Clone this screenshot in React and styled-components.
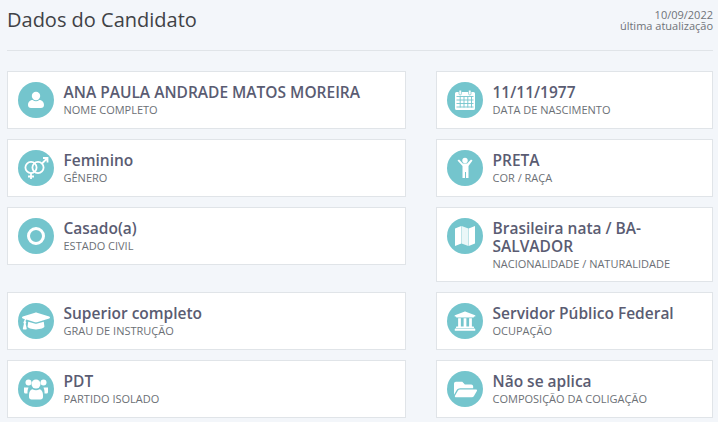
import styled, { createGlobalStyle } from "styled-components";
import { FaGraduationCap, FaUniversity, FaFolderOpen } from "react-icons/fa";

const GlobalStyle = createGlobalStyle`
    body {
        margin: 0;
        background: #f3f6fa;
        font-family: "Open Sans", "Liberation Sans", sans-serif;
    }
`;

const Page = styled.div`
    padding: 0 5px 0 7px;
    height: 422px;
    overflow: hidden;
    box-sizing: border-box;
`;
const Header = styled.div`
    display: flex;
    justify-content: space-between;
    height: 50px;
    border-bottom: 1px solid #e0e4e8;
    margin-bottom: 20px;
`;
const Title = styled.h1`
    margin: 0;
    padding-top: 6px;
    font-size: 20px;
    line-height: 27px;
    font-weight: 400;
    color: #3f4246;
`;
const Updated = styled.div`
    padding-top: 9px;
    font-size: 11px;
    line-height: 11px;
    text-align: right;
    color: #6f7378;
`;
const Grid = styled.div`
    display: grid;
    grid-template-columns: 399px 277px;
    column-gap: 30px;
    row-gap: 10px;
    align-items: start;
`;
const Card = styled.div`
    display: flex;
    align-items: flex-start;
    gap: 9.5px;
    box-sizing: border-box;
    min-height: 58px;
    padding: 10px;
    background: #fff;
    border: 1px solid #e0e4e8;
`;
const IconCircle = styled.div`
    flex: none;
    display: flex;
    align-items: center;
    justify-content: center;
    width: 36px;
    height: 36px;
    border-radius: 50%;
    background: #74c5cd;
    color: #fff;
    font-size: ${(props) => props.$size || 20}px;
`;
const Info = styled.div`
    min-width: 0;
    padding-top: 1px;
`;
const Value = styled.div`
    font-size: 15.5px;
    line-height: 18px;
    font-weight: 600;
    color: #5a5c72;
`;
const Label = styled.div`
    padding-top: 1px;
    font-size: 11px;
    line-height: 15px;
    color: #6c7076;
`;

const UserIcon = () => (
    <svg width="20" height="20" viewBox="0 0 20 20" fill="currentColor">
        <circle cx="10" cy="6" r="4.2" />
        <path d="M2 15c0-3.400 2.400-5 4.700-5 1 .8 2.100 1.200 3.300 1.200s2.300-.4 3.300-1.200c2.300 0 4.700 1.600 4.700 5 0 1.800-1.200 3-3 3H5c-1.800 0-3-1.200-3-3z" />
    </svg>
);

const ChildIcon = () => (
    <svg width="20" height="22" viewBox="0 0 20 22" fill="currentColor">
        <circle cx="10" cy="3.500" r="2.700" />
        <path d="M2.500 3.500l1.500-1 3.800 4h4.400l3.800-4 1.500 1-4 5.500v12h-2.500v-6h-1v6h-2.500v-12z" />
    </svg>
);

const UsersIcon = () => (
    <svg width="26" height="24" viewBox="0 0 26 24" fill="currentColor">
        <circle cx="5.500" cy="5.500" r="3" />
        <circle cx="20.500" cy="5.500" r="3" />
        <path d="M1 10.500h4.500c-.6 1.500-1 3-1 5v1H2.500c-1 0-1.500-.6-1.500-1.500zM25 10.500h-4.500c.6 1.500 1 3 1 5v1h2c1 0 1.500-.6 1.500-1.500z" />
        <circle cx="13" cy="7" r="4.500" />
        <path d="M6 18c0-3.500 1.600-5.500 3.500-5.800 1 .7 2.200 1.100 3.500 1.100s2.500-.4 3.500-1.100c1.900.3 3.500 2.300 3.500 5.800v2c0 1.500-1 2.500-2.500 2.500h-9C7 22.500 6 21.500 6 20z" />
    </svg>
);

const RingIcon = () => (
    <svg width="20" height="20" viewBox="0 0 20 20" fill="none" stroke="currentColor" strokeWidth="3">
        <circle cx="10" cy="10" r="7.500" />
    </svg>
);

const GenderIcon = () => (
    <svg width="36" height="36" viewBox="0 0 36 36" fill="none" stroke="currentColor" strokeWidth="1.800">
        <circle cx="13" cy="17.500" r="5.600" />
        <circle cx="20" cy="17.500" r="5.600" />
        <path d="M13 23v6M10 26.500h6M24 13.500l5-5M25 8h4.500v4.500" />
    </svg>
);

const CalendarIcon = () => (
    <svg width="22" height="22" viewBox="0 0 22 22" fill="currentColor">
        <path d="M2.500 3h17A1.500 1.500 0 0 1 21 4.500v15a1.500 1.500 0 0 1-1.500 1.500h-17A1.500 1.500 0 0 1 1 19.500v-15A1.500 1.500 0 0 1 2.500 3z" />
        <rect x="5" y="1" width="2.400" height="5" rx="1.200" stroke="#74c5cd" strokeWidth=".7" />
        <rect x="14.600" y="1" width="2.400" height="5" rx="1.200" stroke="#74c5cd" strokeWidth=".7" />
        <path d="M2.500 7.500h17M2.500 11h17M2.500 14.500h17M2.500 18h17M6.200 7.500v11M10 7.500v11M13.800 7.500v11M17.500 7.500v11" stroke="#74c5cd" strokeWidth=".9" fill="none" />
    </svg>
);

const MapIcon = () => (
    <svg width="22" height="24" viewBox="0 0 22 24" fill="currentColor">
        <path d="M1 4.500L7.300 2v17.500L1 22z" />
        <path d="M7.600 2l6.800 2.500V22l-6.800-2.500z" opacity=".85" />
        <path d="M14.700 4.500L21 2v17.500L14.700 22z" />
    </svg>
);

const rows = [
    { icon: <UserIcon />, value: "ANA PAULA ANDRADE MATOS MOREIRA", label: "NOME COMPLETO" },
    { icon: <CalendarIcon />, value: "11/11/1977", label: "DATA DE NASCIMENTO" },
    { icon: <GenderIcon />, value: "Feminino", label: "GÊNERO" },
    { icon: <ChildIcon />, value: "PRETA", label: "COR / RAÇA" },
    { icon: <RingIcon />, value: "Casado(a)", label: "ESTADO CIVIL" },
    { icon: <MapIcon />, value: "Brasileira nata / BA-SALVADOR", label: "NACIONALIDADE / NATURALIDADE" },
    { icon: <FaGraduationCap />, size: 28, value: "Superior completo", label: "GRAU DE INSTRUÇÃO" },
    { icon: <FaUniversity />, size: 22, value: "Servidor Público Federal", label: "OCUPAÇÃO" },
    { icon: <UsersIcon />, value: "PDT", label: "PARTIDO ISOLADO" },
    { icon: <FaFolderOpen />, size: 23, value: "Não se aplica", label: "COMPOSIÇÃO DA COLIGAÇÃO" },
];

const App = () => {
    return (
        <Page>
            <GlobalStyle />
            <Header>
                <Title>Dados do Candidato</Title>
                <Updated>
                    10/09/2022
                    <br />
                    última atualização
                </Updated>
            </Header>
            <Grid>
                {rows.map((row) => (
                    <Card key={row.label}>
                        <IconCircle $size={row.size}>{row.icon}</IconCircle>
                        <Info>
                            <Value>{row.value}</Value>
                            <Label>{row.label}</Label>
                        </Info>
                    </Card>
                ))}
            </Grid>
        </Page>
    );
};

export default App;
